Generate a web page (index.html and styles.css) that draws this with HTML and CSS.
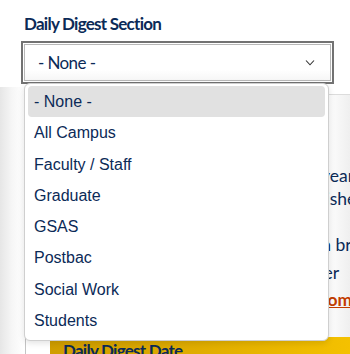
FILE: index.html
```html
<!DOCTYPE html>
<html lang="en">
<head>
  <meta charset="UTF-8"/>
  <meta name="viewport" content="width=device-width, initial-scale=1.0"/>
  <title>Daily Digest Section</title>
  <link rel="stylesheet" href="styles.css">
</head>
<body>
<!-- -------------------------------------------------------------------------- -->
  <div class="field">
    <h2>Daily Digest Section</h2>
    <div class="select">
      <span>- None -</span>
      <svg class="chevron" width="10" height="6" viewBox="0 0 10 6">
        <polyline points="1,0.5 5,4.8 9,0.5" fill="none" stroke="#333" stroke-width="1.1"/>
      </svg>
    </div>

    <ul class="options">
      <li class="active">- None -</li>
      <li>All Campus</li>
      <li>Faculty / Staff</li>
      <li>Graduate</li>
      <li>GSAS</li>
      <li>Postbac</li>
      <li>Social Work</li>
      <li>Students</li>
    </ul>
  </div>
<!-- -------------------------------------------------------------------------- -->
  <div class="section-wrap">
    <div class="panel">
      <div class="desc">
        <div class="line l1">year</div>
        <div class="line l2">published</div>
        <div class="line l3">in brief</div>
        <div class="line l4">over</div>
        <div class="line l5"><a href="#">from</a></div>
      </div>
      <div class="date-box">
        <h3>Daily Digest Date</h3>
      </div>
    </div>
  </div>
</body>
</html>
```

FILE: styles.css
```css
  :root {
    --navy: #0b2a57;
    --gray-line: #d2d2d2;
  }

  body {
    margin: 0;
    background-color: #fff;
    color: var(--navy);
    font-family: Lato, 'Open Sans', sans-serif;
    overflow: hidden;
    height: 354px;
  }

  .field {
    position: relative;
    padding: 15px 0 0 24px;
  }

  h2 {
    margin: 0 0 12px 0;
    font-size: 17px;
    line-height: 17px;
    font-weight: 700;
    letter-spacing: -0.75px;
    color: var(--navy);
  }

  .select {
    box-sizing: border-box;
    width: 307px;
    height: 37px;
    border: 1px solid #b8b8b8;
    outline: 2px solid #727272;
    outline-offset: 1px;
    background: linear-gradient(#fff 70%, #f6f6f6);
    display: flex;
    align-items: center;
    justify-content: space-between;
    padding: 0 15px 0 13px;
    font-size: 17px;
    letter-spacing: -0.6px;
  }

  .chevron {
    display: block;
    margin-top: 1px;
  }

  /* open dropdown list lies over the rest of the form */
  .options {
    position: absolute;
    top: 83px;
    left: 24px;
    z-index: 2;
    box-sizing: border-box;
    width: 305px;
    margin: 0;
    padding: 2px 3px 4px 3px;
    list-style: none;
    background-color: #fff;
    border: 1px solid #cfcfcf;
    border-radius: 6px;
    box-shadow: 0 2px 6px rgba(0,0,0,0.12);
    font-family: 'Liberation Sans', Arial, sans-serif;
    font-size: 16px;
    color: var(--navy);
  }

  .options li {
    height: 31.25px;
    line-height: 31px;
    padding-left: 6px;
    border-radius: 4px;
  }

  .options li.active {
    background-color: #e1e1e1;
  }

  .section-wrap {
    margin-top: 6px;
    padding: 7px 0 0 25px;
    background: linear-gradient(90deg, #e6e6e6 0, #f6f6f6 12px, #fff 24px);
    height: 400px;
  }

  .panel {
    width: 340px;
    height: 400px;
    border-top: 1px solid #dcdcdc;
    border-left: 1px solid #c4c4c4;
    background: linear-gradient(90deg, #fff 300px, #f3f3f3 318px, #e4e4e4);
  }

  .desc {
    padding-top: 69px;
    font-size: 17.5px;
    line-height: 23px;
    white-space: nowrap;
  }

  .line.l1 { padding-left: 295px; }
  .line.l2 { padding-left: 266px; margin-bottom: 23px; }
  .line.l3 { padding-left: 291px; }
  .line.l4 { padding-left: 279px; margin-top: 5px; }
  .line.l5 { padding-left: 289px; margin-top: 4px; }

  .desc a {
    color: #c23d00;
    font-weight: 700;
    text-decoration: underline;
  }

  .date-box {
    margin: 26px 0 0 24px;
    height: 60px;
    background: linear-gradient(90deg, #cf9d00, #e0ad00 150px, #f6c300);
    padding: 3px 13px;
  }

  h3 {
    margin: 0;
    font-size: 17px;
    letter-spacing: -0.75px;
    font-weight: 700;
    color: var(--navy);
  }
```
